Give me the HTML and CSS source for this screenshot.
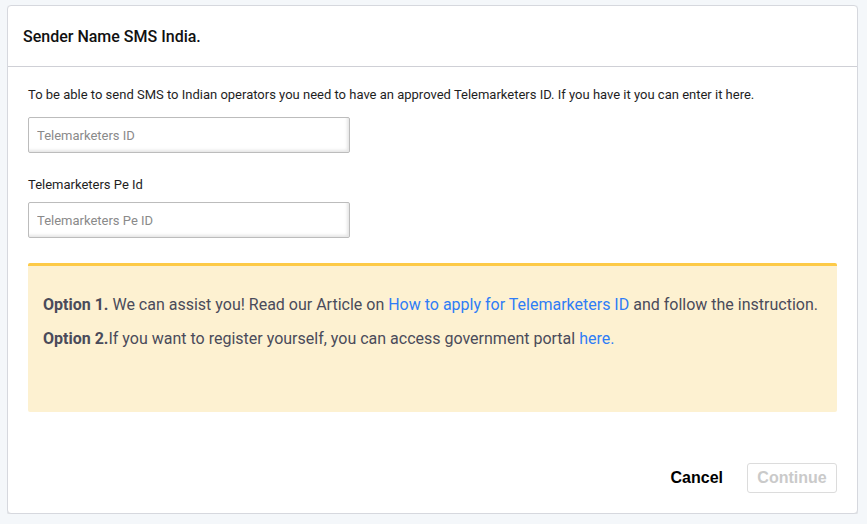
FILE: index.html
```html
<!DOCTYPE html>
<html lang="en">
<head>
<meta charset="utf-8">
<title>Sender Name SMS India</title>
<link rel="stylesheet" href="styles.css">
</head>
<body>
<div class="card">
  <div class="card-header">
    <h1 class="title">Sender Name SMS India.</h1>
  </div>
  <div class="card-body">
    <p class="intro">To be able to send SMS to Indian operators you need to have an approved Telemarketers ID. If you have it you can enter it here.</p>
    <input class="field" type="text" placeholder="Telemarketers ID">
    <label class="label">Telemarketers Pe Id</label>
    <input class="field field-second" type="text" placeholder="Telemarketers Pe ID">
    <div class="notice">
      <p class="notice-line"><b>Option 1.</b> We can assist you! Read our Article on <a class="link" href="#">How to apply for Telemarketers ID</a> and follow the instruction.</p>
      <p class="notice-line"><b>Option 2.</b>If you want to register yourself, you can access government portal <a class="link" href="#">here.</a></p>
    </div>
  </div>
  <div class="card-footer">
    <button class="btn btn-cancel" type="button">Cancel</button>
    <button class="btn btn-continue" type="button" disabled>Continue</button>
  </div>
</div>
</body>
</html>
```

FILE: styles.css
```css
html, body {
  background: #f4f7fa;
}
body {
  margin: 5px 9px 10px 7px;
  font-family: Roboto, "Liberation Sans", Arial, sans-serif;
}
.card {
  box-sizing: border-box;
  height: 509px;
  background: #ffffff;
  border: 1px solid #d6d8de;
  border-radius: 4px;
  box-shadow: 0 1px 2px rgba(0, 0, 0, 0.12);
  display: flex;
  flex-direction: column;
}
.card-header {
  box-sizing: border-box;
  height: 61px;
  border-bottom: 1px solid #cfd0d6;
  display: flex;
  align-items: center;
  padding-left: 15px;
}
.title {
  margin: 0;
  font-size: 16px;
  font-weight: 500;
  color: #111111;
  padding-top: 1px;
}
.card-body {
  padding: 20px 20px 0 20px;
  display: flex;
  flex-direction: column;
  align-items: flex-start;
}
.intro {
  margin: 0;
  font-size: 13px;
  line-height: 16px;
  color: #1e1e1e;
}
.field {
  box-sizing: border-box;
  width: 322px;
  height: 36px;
  margin-top: 14px;
  padding: 0 8px;
  border: 1px solid #bcbcbc;
  border-radius: 2px;
  box-shadow: inset -2px -2px 3px rgba(0, 0, 0, 0.1);
  font-family: Roboto, "Liberation Sans", Arial, sans-serif;
  font-size: 13px;
  color: #333;
  background: #fff;
  outline: none;
}
.field::placeholder {
  color: #8a8a8a;
}
.label {
  display: block;
  margin-top: 24px;
  font-size: 13px;
  line-height: 16px;
  color: #1e1e1e;
}
.field-second {
  margin-top: 9px;
}
.notice {
  box-sizing: border-box;
  align-self: stretch;
  height: 149px;
  margin-top: 25px;
  background: #fdf1d1;
  border-top: 3px solid #fdca47;
  border-radius: 2px;
  padding: 27px 15px 0 15px;
}
.notice-line {
  margin: 0 0 10px 0;
  font-size: 16px;
  line-height: 24px;
  color: #4a4b5a;
}
.notice-line b {
  font-weight: 700;
}
.link {
  color: #2f7df6;
  text-decoration: none;
}
.card-footer {
  margin-top: auto;
  display: flex;
  justify-content: flex-end;
  align-items: center;
  gap: 24px;
  padding: 0 20px 20px 0;
}
.btn {
  font-family: "Liberation Sans", Arial, sans-serif;
  font-size: 16px;
  font-weight: 700;
  background: transparent;
  border: none;
  padding: 0;
  cursor: pointer;
}
.btn-cancel {
  color: #000000;
}
.btn-continue {
  box-sizing: border-box;
  width: 90px;
  height: 30px;
  border: 1px solid #dcdcdc;
  border-radius: 3px;
  color: #cacaca;
  background: #ffffff;
}
```
